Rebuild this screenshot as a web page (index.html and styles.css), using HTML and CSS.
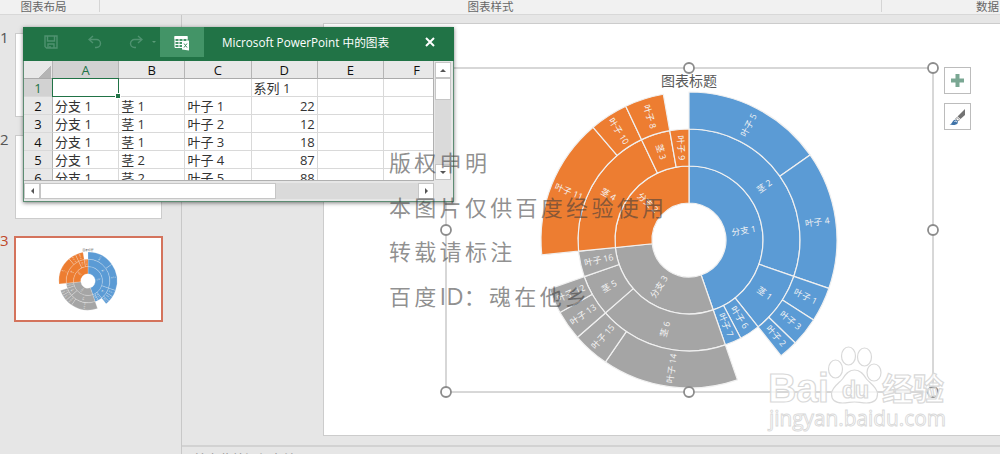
FILE: index.html
```html
<!DOCTYPE html>
<html lang="zh-CN">
  <head>
    <meta charset="UTF-8" />
    <meta name="viewport" content="width=device-width, initial-scale=1.0" />
    <title>Microsoft PowerPoint 中的图表</title>
    <link rel="stylesheet" href="styles.css" />
  </head>
  <body>
    <header class="ribbon">
      <div class="group group-layout">图表布局</div>
      <div class="group group-style">图表样式</div>
      <div class="group group-data">数据</div>
    </header>

    <main class="workspace">
      <aside class="slides">
        <div class="slide-item">
          <span class="number">1</span>
          <div class="thumb"></div>
        </div>
        <div class="slide-item">
          <span class="number">2</span>
          <div class="thumb"></div>
        </div>
        <div class="slide-item active">
          <span class="number">3</span>
          <div class="thumb">
            <svg class="thumb-chart" width="70" height="70" viewBox="-178 -178 356 356">
              <text class="thumb-title" y="-155">图表标题</text>
              <g class="sunburst"></g>
            </svg>
          </div>
        </div>
      </aside>

      <section class="editor">
        <div class="canvas">
          <div class="slide">
            <svg class="chart" width="676" height="411" viewBox="324 24 676 411">
              <rect class="frame" x="446" y="68" width="487" height="324" />
              <text class="chart-title" x="689" y="86">图表标题</text>
              <g class="sunburst" transform="translate(689 240)"></g>
              <g class="handles">
                <circle cx="446" cy="68" r="5" />
                <circle cx="689" cy="68" r="5" />
                <circle cx="933" cy="68" r="5" />
                <circle cx="446" cy="230" r="5" />
                <circle cx="933" cy="230" r="5" />
                <circle cx="446" cy="392" r="5" />
                <circle cx="689" cy="392" r="5" />
                <circle cx="933" cy="392" r="5" />
              </g>
            </svg>
            <div class="chart-tools">
              <button class="tool" type="button">
                <svg width="26" height="26" viewBox="0 0 26 26">
                  <path d="M10.500 6h4v4.500h4.500v4h-4.500v4.500h-4v-4.500H6v-4h4.500z" fill="#7aa793" />
                </svg>
              </button>
              <button class="tool" type="button">
                <svg width="26" height="26" viewBox="0 0 26 26">
                  <path d="M20 5v6l-4.500 4-3-2.500z" fill="#737373" />
                  <path d="M12 13.500l2.500 2.200-1.500 1.500-2.500-2.300z" fill="#fff" stroke="#737373" stroke-width=".8" />
                  <path d="M4.500 20.500c3 0 2.500-4.500 5.500-4.800 2 0 3.500 1.500 2.800 3.200-1 2.200-5 2.500-8.300 1.600z" fill="#3f73a8" />
                  <path d="M9.500 17.500c1-.8 2.300-.3 2.400.8" fill="none" stroke="#fff" stroke-width="1" />
                </svg>
              </button>
            </div>
          </div>
        </div>
        <div class="notes">单击此处添加备注</div>
      </section>
    </main>

    <div class="sheet-window">
      <div class="titlebar">
        <span class="icon save">
          <svg width="14" height="14" viewBox="0 0 14 14">
            <path d="M1 1h12v12H2.500L1 11.500zM3.500 1v5h7V1M4 13V9h6v4M6 11v2" />
          </svg>
        </span>
        <span class="icon undo">
          <svg width="14" height="14" viewBox="0 0 14 14">
            <path d="M5 1L1 4.500 5 8M1 4.500h7.500a4 4 0 0 1 0 8H7" />
          </svg>
        </span>
        <span class="icon redo">
          <svg width="14" height="14" viewBox="0 0 14 14">
            <path d="M9 1l4 3.500L9 8M13 4.500H5.500a4 4 0 0 0 0 8H7" />
          </svg>
        </span>
        <span class="caret"></span>
        <span class="edit-data">
          <svg width="16" height="16" viewBox="0 0 16 16">
            <path d="M.5 1h13v3H.5z" fill="#fff" />
            <path d="M1 1.500h12v11H1zM1 6.500h12M1 9.500h12M5 4v8.500M9 4v8.500" fill="none" stroke="#fff" />
            <path d="M8 6.500l7-1v10l-7-1z" fill="#fff" />
            <path d="M10 8.500l3 4M13 8.500l-3 4" stroke="#3f8e62" />
          </svg>
        </span>
        <span class="caption">Microsoft PowerPoint 中的图表</span>
        <svg class="close" width="10" height="10" viewBox="0 0 10 10">
          <path d="M1 1l8 8M9 1L1 9" />
        </svg>
      </div>
      <div class="sheet-body">
        <div class="grid-wrap">
          <table class="grid">
            <thead>
              <tr>
                <th class="corner"></th>
                <th class="selected">A</th>
                <th>B</th>
                <th>C</th>
                <th>D</th>
                <th>E</th>
                <th>F</th>
              </tr>
            </thead>
            <tbody>
              <tr><th class="selected">1</th><td class="cursor"></td><td></td><td></td><td>系列 1</td><td></td><td></td></tr>
              <tr><th>2</th><td>分支 1</td><td>茎 1</td><td>叶子 1</td><td class="num">22</td><td></td><td></td></tr>
              <tr><th>3</th><td>分支 1</td><td>茎 1</td><td>叶子 2</td><td class="num">12</td><td></td><td></td></tr>
              <tr><th>4</th><td>分支 1</td><td>茎 1</td><td>叶子 3</td><td class="num">18</td><td></td><td></td></tr>
              <tr><th>5</th><td>分支 1</td><td>茎 2</td><td>叶子 4</td><td class="num">87</td><td></td><td></td></tr>
              <tr><th>6</th><td>分支 1</td><td>茎 2</td><td>叶子 5</td><td class="num">88</td><td></td><td></td></tr>
            </tbody>
          </table>
        </div>
        <div class="scroll-v">
          <span class="btn"><i class="arrow up"></i></span>
          <span class="knob"></span>
          <span class="btn end"><i class="arrow down"></i></span>
        </div>
      </div>
      <div class="scroll-h">
        <span class="btn"><i class="arrow left"></i></span>
        <span class="knob"></span>
        <span class="btn end"><i class="arrow right"></i></span>
      </div>
    </div>

    <div class="copyright">
      <p>版权申明</p>
      <p>本图片仅供百度经验使用</p>
      <p>转载请标注</p>
      <p>百度<span class="latin">ID</span>：魂在他乡</p>
    </div>

    <svg class="baidu" width="190" height="94" viewBox="762 344 190 94">
      <g class="paw">
        <ellipse cx="835.500" cy="369" rx="7" ry="9" />
        <ellipse cx="848.500" cy="356" rx="7" ry="9" />
        <ellipse cx="864.500" cy="357" rx="7" ry="9" />
        <ellipse cx="874" cy="372.500" rx="7" ry="8.500" />
        <path d="M854.500 370c6 0 9 4 12 9 3 4 11 8 11 15 0 6-4 9-11 9-5 0-8-1-12-1s-7 1-12 1c-7 0-11-3-11-9 0-7 8-11 11-15 3-5 6-9 12-9z" />
      </g>
      <text class="mark" x="768" y="402" textLength="61" lengthAdjust="spacingAndGlyphs">Bai</text>
      <text class="mark du" x="842" y="398" textLength="27">du</text>
      <text class="mark cn" x="882" y="400" textLength="62">经验</text>
      <text class="mark url" x="769" y="426" textLength="177" lengthAdjust="spacingAndGlyphs">jingyan.baidu.com</text>
    </svg>

    <script src="chart.js"></script>
  </body>
</html>
```
FILE: styles.css
```css
* {
  box-sizing: border-box;
}

body {
  margin: 0;
  height: 454px;
  display: flex;
  flex-direction: column;
  overflow: hidden;
  position: relative;
  background: #e6e6e6;
  font-family: "Open Sans", "Noto Sans CJK SC", sans-serif;
}

.ribbon {
  display: flex;
  flex: none;
  height: 15px;
  background: #f1f1f1;
  border-bottom: 1px solid #d8d8d8;
  color: #666;
  font-family: "Noto Sans CJK SC", sans-serif;
  font-size: 11.5px;
  line-height: 12px;
}

.group {
  height: 12px;
  text-align: center;
  white-space: nowrap;
  border-right: 1px solid #d5d5d5;
}

.group-layout {
  width: 100px;
  padding-right: 12px;
}

.group-style {
  width: 782px;
}

.group-data {
  flex: 1;
  padding-left: 94px;
  border: none;
  text-align: left;
}

.workspace {
  flex: 1;
  display: flex;
  min-height: 0;
}

/* slide list */
.slides {
  width: 182px;
  padding-top: 18px;
  border-right: 1px solid #c8c8c8;
}

.slide-item {
  display: flex;
  height: 84px;
  margin-bottom: 18px;
}

.number {
  width: 15px;
  margin-top: -5px;
  font-size: 15px;
  line-height: 18px;
  color: #555;
}

.thumb {
  width: 147px;
  background: #fff;
  border: 1px solid #ccc;
}

.slide-item.active {
  height: 86px;
  margin-top: -1px;
}

.active .number {
  width: 14px;
  color: #c0492b;
}

.active .thumb {
  width: 149px;
  padding: 8px 0 0 37px;
  border: 2px solid #d4735c;
}

.thumb-chart {
  display: block;
}

.thumb-title {
  font-size: 14px;
  fill: #555;
  text-anchor: middle;
}

/* slide area */
.editor {
  flex: 1;
  min-width: 0;
  display: flex;
  flex-direction: column;
}

.canvas {
  height: 430px;
  flex: none;
  padding: 8px 0 0 141px;
}

.slide {
  position: relative;
  height: 413px;
  background: #fff;
  border: 1px solid #ccc;
  border-right: none;
}

.chart {
  display: block;
}

.frame {
  fill: none;
  stroke: #b0b0b0;
}

.chart-title {
  font-family: "Noto Sans CJK SC", sans-serif;
  font-size: 14px;
  text-anchor: middle;
  fill: #595959;
}

.sunburst path {
  stroke: #f0f0f0;
  stroke-width: 1.2;
}

.sunburst text {
  font-family: "Open Sans", "Noto Sans CJK SC", sans-serif;
  font-size: 8.7px;
  fill: #f4f4f4;
  text-anchor: middle;
}

.handles circle {
  fill: #fff;
  stroke: #8c8c8c;
  stroke-width: 1.8;
}

.chart-tools {
  position: absolute;
  left: 620px;
  top: 43px;
  display: flex;
  flex-direction: column;
  gap: 9px;
}

.tool {
  display: block;
  width: 27px;
  height: 27px;
  padding: 0;
  background: #fff;
  border: 1px solid #bcbcbc;
}

.tool svg {
  display: block;
}

.notes {
  flex: 1;
  padding: 5px 0 0 11px;
  border-top: 2px solid #d2d2d2;
  overflow: hidden;
  color: #999;
  font-size: 13px;
  line-height: 14px;
}

/* data sheet window */
.sheet-window {
  position: absolute;
  left: 23px;
  top: 27px;
  width: 431px;
  height: 175px;
  background: #e6e6e6;
  border: 1px solid #5d8c73;
  border-top: none;
  box-shadow: 0 1px 4px rgba(0, 0, 0, 0.5);
}

.titlebar {
  display: flex;
  align-items: center;
  height: 34px;
  margin: 0 -1px;
  padding-bottom: 4px;
  background: #217346;
  color: #fff;
}

.icon {
  height: 14px;
}

.icon svg {
  display: block;
  fill: none;
  stroke: #4f9270;
  stroke-width: 1.4;
}

.save {
  margin-left: 21px;
}

.undo {
  margin-left: 30px;
}

.redo {
  margin-left: 27px;
}

.caret {
  margin-left: 9px;
  border: 2.5px solid transparent;
  border-top-color: #5b9b78;
  border-bottom: none;
}

.edit-data {
  width: 44px;
  height: 30px;
  margin-left: 4px;
  padding: 8px 14px;
  background: #439467;
}

.edit-data svg {
  display: block;
}

.caption {
  width: 168px;
  margin-left: 18px;
  font-size: 11.7px;
  line-height: 30px;
  white-space: nowrap;
}

.close {
  margin-left: 35px;
}

.close path {
  stroke: #fff;
  stroke-width: 2;
}

.sheet-body {
  display: flex;
  height: 120px;
}

.grid-wrap {
  width: 410px;
  height: 120px;
  overflow: hidden;
  background: #fff;
  border-right: 1px solid #b0b0b0;
  border-bottom: 1px solid #b0b0b0;
}

.grid {
  width: 426px;
  table-layout: fixed;
  border-collapse: separate;
  border-spacing: 0;
  font-size: 13px;
  color: #333;
}

.grid th,
.grid td {
  height: 18px;
  padding: 1px 2px 0;
  line-height: 16px;
  border-right: 1px solid #d9d9d9;
  border-bottom: 1px solid #d9d9d9;
  white-space: nowrap;
}

.grid .num {
  text-align: right;
}

.grid th {
  padding: 1px 0 0;
  background: #e8e8e8;
  border-right-color: #b5b5b5;
  font-weight: 500;
  color: #111;
}

.grid thead th {
  width: 66.200px;
  border-bottom-color: #aaa;
}

.grid thead .corner {
  width: 29px;
  background: linear-gradient(135deg, transparent 50%, #b4b4b4 50%) 14px 4px / 13px 13px no-repeat #e8e8e8;
}

.grid .selected {
  background: #d2d2d2;
  color: #217346;
}

.grid .cursor {
  position: relative;
}

.cursor::before {
  content: "";
  position: absolute;
  inset: -1px;
  border: 1.500px solid #217346;
}

.cursor::after {
  content: "";
  position: absolute;
  right: -2px;
  bottom: -2px;
  width: 4px;
  height: 4px;
  background: #217346;
  outline: 1px solid #fff;
}

.scroll-v {
  display: flex;
  flex-direction: column;
  width: 16px;
  margin: 1px 0 1px 1px;
  background: #dadada;
}

.scroll-h {
  display: flex;
  width: 410px;
  height: 16px;
  margin-top: 2px;
  background: #dadada;
}

.btn,
.knob {
  flex: none;
  background: #fff;
  border: 1px solid #c6c6c6;
}

.btn {
  display: flex;
  align-items: center;
  justify-content: center;
  width: 16px;
  height: 16px;
}

.scroll-v .knob {
  height: 22px;
}

.scroll-h .knob {
  width: 236px;
}

.scroll-v .end {
  margin-top: auto;
}

.scroll-h .end {
  margin-left: auto;
}

.arrow {
  border: 3.5px solid transparent;
}

.up {
  border-bottom-color: #555;
  border-top: none;
}

.down {
  border-top-color: #555;
  border-bottom: none;
}

.left {
  border-right-color: #555;
  border-left: none;
}

.right {
  border-left-color: #555;
  border-right: none;
}

/* watermarks over the page */
.copyright {
  position: absolute;
  left: 389px;
  top: 139px;
  color: rgba(60, 60, 60, 0.58);
  font-family: "Noto Sans CJK SC", sans-serif;
  font-size: 22px;
  font-weight: 400;
  line-height: 44.600px;
  letter-spacing: 3.300px;
  white-space: nowrap;
}

.copyright p {
  margin: 0;
}

.latin {
  font-family: "Open Sans", sans-serif;
  font-size: 24px;
  letter-spacing: 0;
}

.baidu {
  position: absolute;
  left: 762px;
  top: 344px;
}

.paw,
.mark {
  fill: rgba(255, 255, 255, 0.75);
  stroke: #d9d9d9;
  stroke-width: 1.2;
}

.mark {
  font-family: "Liberation Sans", sans-serif;
  font-size: 40px;
  font-weight: bold;
}

.du {
  font-size: 23px;
}

.cn {
  font-family: "Noto Sans CJK SC", sans-serif;
  font-size: 31px;
}

.url {
  font-family: "Open Sans", sans-serif;
  font-size: 21px;
  font-weight: normal;
  stroke-width: 0.9;
}
```
FILE: chart.js
```js
const HOLE = 37;
const RING = 37;
const BLUE = "#5b9bd5";
const ORANGE = "#ed7d31";
const GRAY = "#a5a5a5";

// label, ring, start angle, end angle (clockwise from the top), colour
const segments = [
  ["分支 1", 0, 0, 160.9, BLUE],
  ["茎 2", 1, 0, 109.1, BLUE],
  ["茎 1", 1, 109.1, 141.5, BLUE],
  ["叶子 6", 1, 141.5, 152.2, BLUE],
  ["叶子 7", 1, 152.2, 160.9, BLUE],
  ["叶子 5", 2, 0, 54.9, BLUE],
  ["叶子 4", 2, 54.9, 109.1, BLUE],
  ["叶子 1", 2, 109.1, 122.7, BLUE],
  ["叶子 3", 2, 122.7, 134.1, BLUE],
  ["叶子 2", 2, 134.1, 141.5, BLUE],
  ["分支 3", 0, 160.9, 264.2, GRAY],
  ["茎 6", 1, 160.9, 228.9, GRAY],
  ["茎 5", 1, 228.9, 250.7, GRAY],
  ["叶子 16", 1, 250.7, 264.2, GRAY],
  ["叶子 14", 2, 160.9, 214.4, GRAY],
  ["叶子 15", 2, 214.4, 228.9, GRAY],
  ["叶子 13", 2, 228.9, 240.7, GRAY],
  ["叶子 12", 2, 240.7, 250.7, GRAY],
  ["分支 2", 0, 264.2, 360, ORANGE],
  ["茎 4", 1, 264.2, 334.7, ORANGE],
  ["茎 3", 1, 334.7, 350, ORANGE],
  ["叶子 9", 1, 350, 360, ORANGE],
  ["叶子 11", 2, 264.2, 319.6, ORANGE],
  ["叶子 10", 2, 319.6, 334.7, ORANGE],
  ["叶子 8", 2, 334.7, 350, ORANGE],
];

function point(radius, angle) {
  const rad = (angle * Math.PI) / 180;
  return `${(radius * Math.sin(rad)).toFixed(2)} ${(-radius * Math.cos(rad)).toFixed(2)}`;
}

function wedge(inner, outer, start, end) {
  const large = end - start > 180 ? 1 : 0;
  return `M${point(inner, start)}L${point(outer, start)}A${outer} ${outer} 0 ${large} 1 ${point(outer, end)}L${point(inner, end)}A${inner} ${inner} 0 ${large} 0 ${point(inner, start)}Z`;
}

let paths = "";
let labels = "";
segments.forEach(([label, ring, start, end, color]) => {
  const inner = HOLE + ring * RING;
  const middle = (start + end) / 2;
  const rotation = middle > 180 ? middle - 270 : middle - 90;
  const [x, y] = point(inner + RING / 2, middle).split(" ");
  paths += `<path d="${wedge(inner, inner + RING, start, end)}" fill="${color}" />`;
  labels += `<text transform="translate(${x} ${y}) rotate(${rotation})" y="3">${label}</text>`;
});

document.querySelectorAll(".sunburst").forEach((group) => {
  group.innerHTML = paths + labels;
});
```
